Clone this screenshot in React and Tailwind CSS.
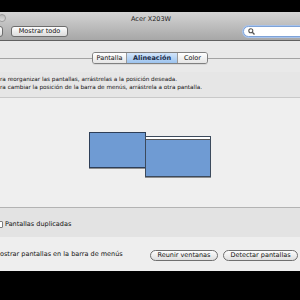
export default function App() {
  const font = { fontFamily: '"DejaVu Sans", "Liberation Sans", sans-serif' };
  return (
    <div className="w-[300px] h-[300px] bg-black flex flex-col overflow-hidden text-[#111]" style={font}>
      <div className="h-[12px] shrink-0 bg-black" />
      {/* toolbar */}
      <div className="h-[29px] shrink-0 bg-gradient-to-b from-[#d4d4d4] to-[#a7a7a7] border-b border-[#606060] relative">
        <div className="absolute left-[-2px] top-[2px] w-[8px] h-[8px] rounded-full bg-gradient-to-b from-[#b8b8b8] to-[#dcdcdc] border border-[#9a9a9a]" />
        <div className="text-center text-[6.5px] leading-[8px] pt-[3px] pl-[2px] text-[#222]">Acer X203W</div>
        <div className="flex items-center mt-[3px] h-[11px]">
          <div className="w-[14px] h-[11px] ml-[-11px] rounded-[3px] border border-[#6d6d6d] bg-gradient-to-b from-[#fdfdfd] to-[#dcdcdc]" />
          <div className="ml-[8px] w-[57px] h-[11px] rounded-[3px] border border-[#6d6d6d] bg-gradient-to-b from-[#fdfdfd] to-[#dcdcdc] flex items-center justify-center text-[6.5px] leading-none">Mostrar todo</div>
          <div className="ml-auto mr-[-12px] w-[69px] h-[11px] rounded-full border border-[#7ea3d8] bg-white shadow-[0_0_0_1px_#a9c3ea] flex items-center pl-[4px]">
            <svg width="7" height="7" viewBox="0 0 7 7">
              <circle cx="2.8" cy="2.8" r="2" fill="none" stroke="#555" strokeWidth="1.1" />
              <line x1="4.3" y1="4.3" x2="6.5" y2="6.5" stroke="#555" strokeWidth="1.3" />
            </svg>
          </div>
        </div>
      </div>
      {/* content */}
      <div className="h-[230px] shrink-0 bg-[#e9e9e9] flex flex-col">
        {/* tabs */}
        <div className="relative h-[31px] shrink-0 flex justify-center pt-[11px]">
          <div className="absolute left-0 right-0 top-[17px] h-px bg-[#a3a3a3]" />
          <div className="relative flex h-[12px] rounded-[3px] border border-[#808080] overflow-hidden text-[6.5px] leading-none shadow-[0_1px_0_#d8d8d8]">
            <div className="w-[34px] flex items-center justify-center bg-gradient-to-b from-[#ffffff] to-[#e5e5e5] border-r border-[#9a9a9a]">Pantalla</div>
            <div className="w-[51px] flex items-center justify-center bg-gradient-to-b from-[#d3e5fa] to-[#9cc3ee] font-bold text-[#1b2c49] border-r border-[#9a9a9a]">Alineación</div>
            <div className="w-[29px] flex items-center justify-center bg-gradient-to-b from-[#ffffff] to-[#e5e5e5]">Color</div>
          </div>
        </div>
        {/* description */}
        <div className="h-[25px] shrink-0 bg-[#e6e6e6] text-[5.7px] leading-[8px] pt-[3px] whitespace-nowrap">
          <div>ra reorganizar las pantallas, arrástrelas a la posición deseada.</div>
          <div>ra cambiar la posición de la barra de menús, arrástrela a otra pantalla.</div>
        </div>
        {/* arrangement */}
        <div className="h-[111px] shrink-0 bg-[#efefef] border-t border-[#c9c9c9] border-b border-b-[#b3b3b3] relative">
          <div className="absolute left-[89px] top-[34px] w-[57px] h-[36px] bg-[#6f9bd3] border border-[#2d3e57] shadow-[0_1px_0_#8f8f8f]" />
          <div className="absolute left-[145px] top-[38px] w-[66px] h-[41px] bg-[#6f9bd3] border border-[#3c4a5c] shadow-[0_1px_0_#8f8f8f]">
            <div className="h-[3px] bg-white border-b border-[#555]" />
          </div>
        </div>
        {/* checkbox row */}
        <div className="h-[29px] shrink-0 bg-[#e3e3e3] flex items-center pt-[3px]">
          <div className="w-[7px] h-[7px] ml-[-4px] rounded-[1px] border border-[#7d7d7d] bg-white" />
          <span className="ml-[2px] text-[6.5px] leading-none">Pantallas duplicadas</span>
        </div>
        {/* bottom */}
        <div className="flex-1 bg-[#eeeeee] flex items-center">
          <span className="text-[6.5px] leading-none whitespace-nowrap">ostrar pantallas en la barra de menús</span>
          <div className="ml-auto flex gap-[5px] mr-[2px] mt-[2px]">
            <div className="w-[68px] h-[11px] rounded-full border border-[#6f6f6f] bg-gradient-to-b from-[#fdfdfd] to-[#dedede] flex items-center justify-center text-[6.5px] leading-none">Reunir ventanas</div>
            <div className="w-[75px] h-[11px] rounded-full border border-[#6f6f6f] bg-gradient-to-b from-[#fdfdfd] to-[#dedede] flex items-center justify-center text-[6.5px] leading-none">Detectar pantallas</div>
          </div>
        </div>
      </div>
      <div className="flex-1 bg-black" />
    </div>
  );
}
